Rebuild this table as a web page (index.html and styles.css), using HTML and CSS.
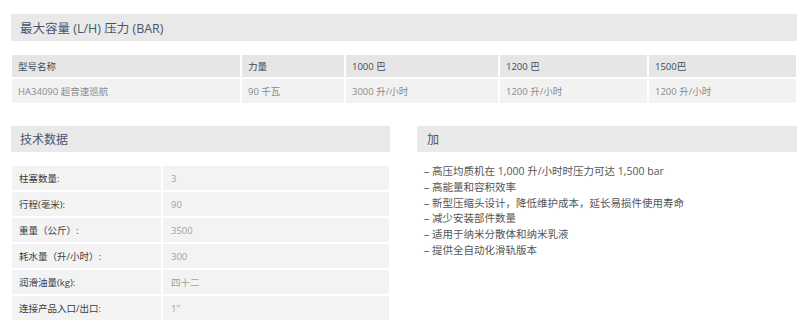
FILE: index.html
```html
<!DOCTYPE html>
<html lang="zh">
<head>
<meta charset="utf-8">
<link rel="stylesheet" href="styles.css">
</head>
<body>
<div class="page">
  <section class="capacity">
    <h2 class="bar title-blue">最大容量 (L/H) 压力 (BAR)</h2>
    <div class="cap-grid">
      <div class="th">型号名称</div>
      <div class="th">力量</div>
      <div class="th">1000 巴</div>
      <div class="th">1200 巴</div>
      <div class="th">1500巴</div>
      <div class="td">HA34090 超音速巡航</div>
      <div class="td">90 千瓦</div>
      <div class="td">3000 升/小时</div>
      <div class="td">1200 升/小时</div>
      <div class="td">1200 升/小时</div>
    </div>
  </section>
  <div class="columns">
    <section class="col">
      <h2 class="bar title-blue">技术数据</h2>
      <div class="spec">
        <div class="sl">柱塞数量:</div><div class="sv">3</div>
        <div class="sl">行程(毫米):</div><div class="sv">90</div>
        <div class="sl">重量（公斤）:</div><div class="sv">3500</div>
        <div class="sl">耗水量（升/小时）:</div><div class="sv">300</div>
        <div class="sl">润滑油量(kg):</div><div class="sv">四十二</div>
        <div class="sl">连接产品入口/出口:</div><div class="sv">1"</div>
      </div>
    </section>
    <section class="col">
      <h2 class="bar title-gray">加</h2>
      <ul class="plus">
        <li>– 高压均质机在 1,000 升/小时时压力可达 1,500 bar</li>
        <li>– 高能量和容积效率</li>
        <li>– 新型压缩头设计，降低维护成本，延长易损件使用寿命</li>
        <li>– 减少安装部件数量</li>
        <li>– 适用于纳米分散体和纳米乳液</li>
        <li>– 提供全自动化滑轨版本</li>
      </ul>
    </section>
  </div>
</div>
</body>
</html>
```

FILE: styles.css
```css
* { box-sizing: border-box; }
body {
  margin: 0;
  background: #fff;
  font-family: "Open Sans", "Noto Sans CJK SC", sans-serif;
}
.page {
  padding: 14px 3px 0 11px;
}
.bar {
  margin: 0;
  background: #e9e9e9;
  height: 27px;
  display: flex;
  align-items: center;
  padding-left: 9px;
  font-size: 12.5px;
  font-weight: 400;
}
.title-blue { color: #47566c; }
.title-gray { color: #555; padding-left: 10px; }
.cap-grid {
  margin: 14px 1px 0 1px;
  display: grid;
  grid-template-columns: 228px 102px 152px 147px 1fr;
  grid-template-rows: 22px 24px;
  gap: 2px;
  font-size: 9.5px;
}
.th, .td {
  display: flex;
  align-items: center;
  padding-left: 6px;
}
.th { background: #e6e6e6; color: #3e4a5c; }
.td { background: #f2f2f2; color: #8a8a8a; }
.columns {
  margin-top: 23px;
  display: grid;
  grid-template-columns: 379px 1fr;
  gap: 27px;
}
.columns .bar { height: 26px; font-size: 12px; }
.spec {
  margin: 14px 1px 0 1px;
  display: grid;
  grid-template-columns: 149px 1fr;
  grid-auto-rows: 24px;
  gap: 2px;
  font-size: 9.5px;
}
.sl, .sv {
  background: #f3f3f3;
  display: flex;
  align-items: center;
}
.sl { padding-left: 7px; color: #3a3a3a; }
.sv { padding-left: 8px; color: #a0a0a0; }
.plus {
  list-style: none;
  margin: 12px 0 0 0;
  padding: 0 0 0 7px;
  font-size: 10.5px;
  line-height: 15.8px;
  color: #555;
}
```
